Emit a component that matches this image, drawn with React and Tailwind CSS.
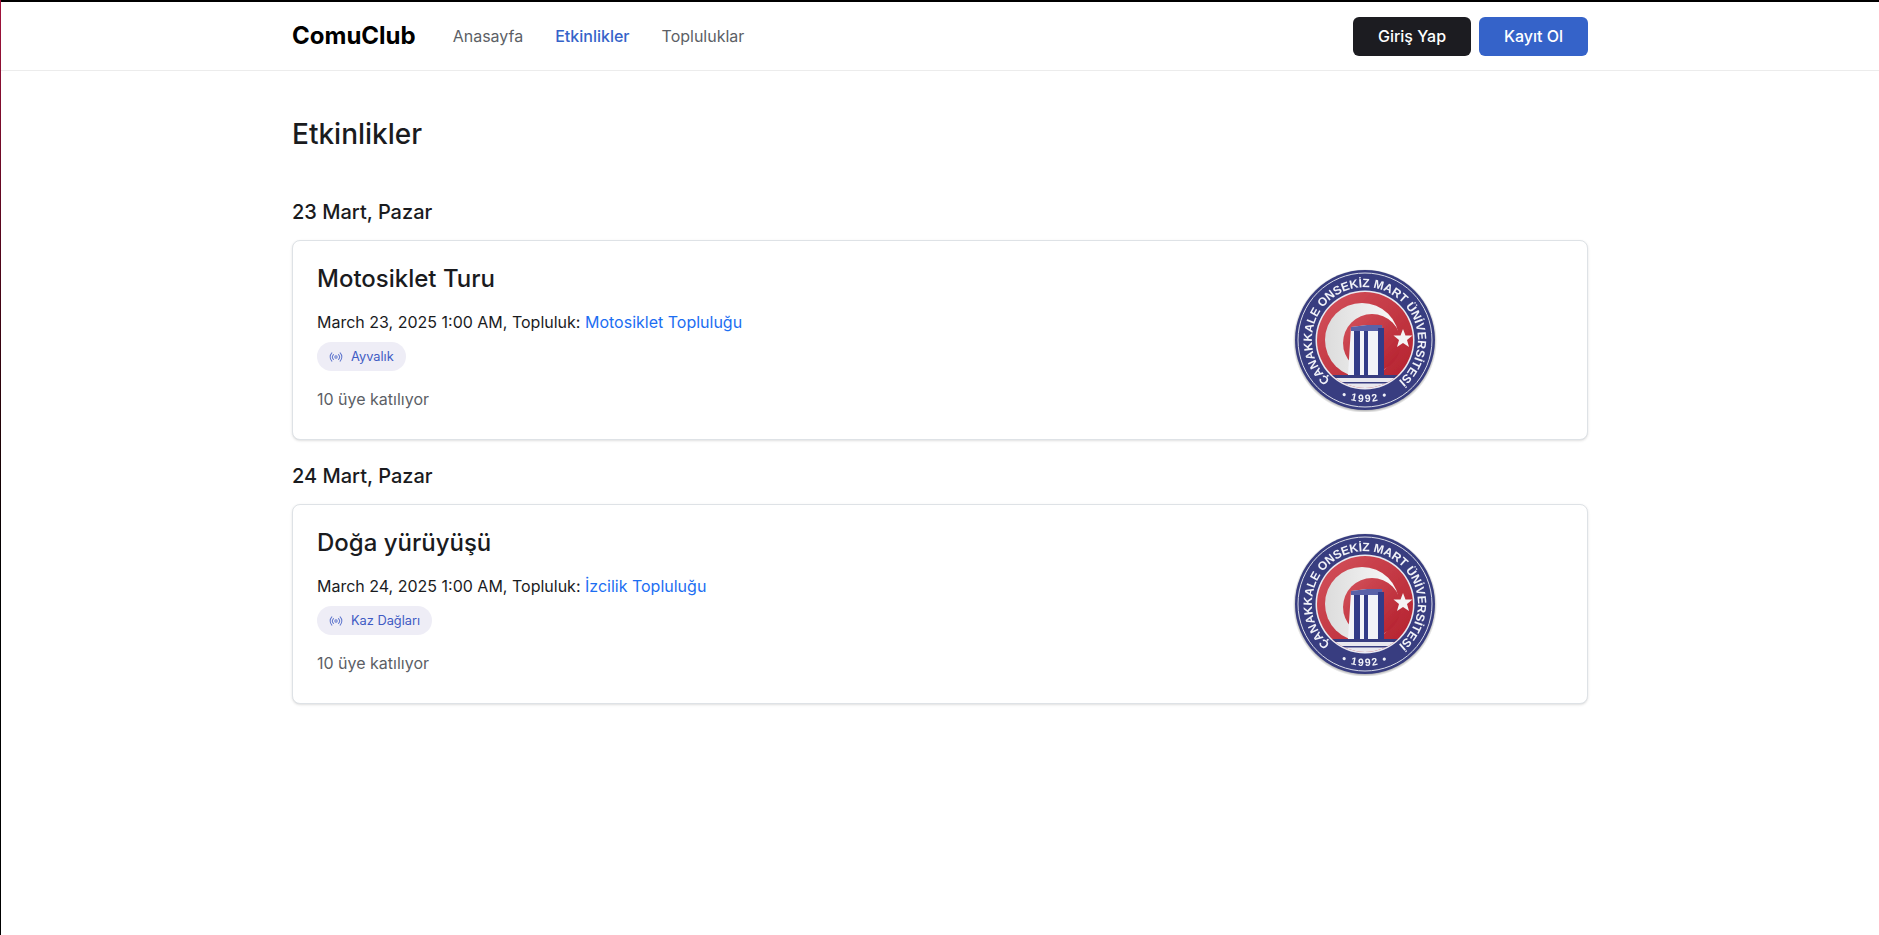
import { Radio } from "lucide-react";

const Seal = ({ id }) => (
    <svg width="144" height="144" viewBox="0 0 144 144" className="block">
        <defs>
            <radialGradient id={`${id}-glow`} cx="50%" cy="50%" r="50%">
                <stop offset="93%" stopColor="#000" stopOpacity="0.5" />
                <stop offset="100%" stopColor="#000" stopOpacity="0" />
            </radialGradient>
            <linearGradient id={`${id}-red`} x1="0" y1="0" x2="1" y2="1">
                <stop offset="0%" stopColor="#d4525c" />
                <stop offset="100%" stopColor="#b31f2c" />
            </linearGradient>
            <linearGradient id={`${id}-white`} x1="0" y1="0" x2="1" y2="0">
                <stop offset="0%" stopColor="#dcdcdc" />
                <stop offset="100%" stopColor="#fafafa" />
            </linearGradient>
            <clipPath id={`${id}-disk`}>
                <circle cx="72" cy="72" r="48" />
            </clipPath>
            <filter id={`${id}-soft`}>
                <feGaussianBlur stdDeviation="0.35" />
            </filter>
            <path id={`${id}-top`} d="M 37 112 A 53 53 0 1 1 100 117" fill="none" />
            <path id={`${id}-bottom`} d="M 36.5 122.8 A 62 62 0 0 0 107.5 122.8" fill="none" />
        </defs>
        <circle cx="72" cy="73" r="72" fill={`url(#${id}-glow)`} />
        <g filter={`url(#${id}-soft)`}>
            <circle cx="72" cy="72" r="70" fill="#383d80" />
            <circle cx="72" cy="72" r="67" fill="none" stroke="#d9dbe8" strokeWidth="1" />
            <circle cx="72" cy="72" r="49.5" fill="#e9eaf2" />
            <circle cx="72" cy="72" r="48" fill={`url(#${id}-red)`} />
            <g clipPath={`url(#${id}-disk)`}>
                <circle cx="69" cy="72" r="37" fill={`url(#${id}-white)`} />
                <circle cx="79" cy="75" r="29" fill={`url(#${id}-red)`} />
                <rect x="20" y="107" width="104" height="3" fill="#383d80" />
                <rect x="20" y="110" width="104" height="10" fill="#e8e8ee" />
                <rect x="20" y="114" width="104" height="1.5" fill="#383d80" />
            </g>
            <polygon points="110,61 112.5,67.5 119.5,67.5 114,72 116,79 110,75 104,79 106,72 100.5,67.5 107.5,67.5" fill="#f4f4f4" />
            <path d="M55 107 L58 59 L74 57 H89 L91 107 Z" fill="#f2f3f8" />
            <path d="M58 59 L74 57 H89 L89.5 63 H58 Z" fill="#5a62a8" />
            <rect x="61" y="63" width="6" height="44" fill="#323a88" />
            <rect x="71" y="63" width="4" height="44" fill="#323a88" />
            <rect x="85" y="60" width="6" height="47" fill="#323a88" />
            <text fill="#f1f2f8" fontFamily="'Liberation Sans', sans-serif" fontSize="12" fontWeight="700">
                <textPath href={`#${id}-top`} textLength="258" lengthAdjust="spacing">ÇANAKKALE ONSEKİZ MART ÜNİVERSİTESİ</textPath>
            </text>
            <text fill="#f1f2f8" fontFamily="'Liberation Sans', sans-serif" fontSize="10.5" fontWeight="700" letterSpacing="1.5" textAnchor="middle">
                <textPath href={`#${id}-bottom`} startOffset="50%">• 1992 •</textPath>
            </text>
        </g>
    </svg>
);

const events = [
    {
        day: "23 Mart, Pazar",
        title: "Motosiklet Turu",
        date: "March 23, 2025 1:00 AM",
        club: "Motosiklet Topluluğu",
        place: "Ayvalık",
    },
    {
        day: "24 Mart, Pazar",
        title: "Doğa yürüyüşü",
        date: "March 24, 2025 1:00 AM",
        club: "İzcilik Topluluğu",
        place: "Kaz Dağları",
    },
];

const App = () => {
    return (
        <div className="relative min-h-[935px] bg-white border-t-2 border-black text-[#1a1b1e]" style={{ fontFamily: "Inter, sans-serif" }}>
            {/* window edge */}
            <div className="absolute left-0 -top-[2px] bottom-0 w-px bg-gradient-to-b from-[#a3133c] to-black to-[70%]"></div>

            {/* Header */}
            <header className="h-[69px] border-b border-[#ececec]">
                <div className="w-[1296px] h-full ml-[292px] flex items-center justify-between">
                    <div className="flex items-center">
                        <span className="text-2xl font-bold text-black mr-[37px]">ComuClub</span>
                        <nav className="flex items-center gap-8 text-base font-normal text-[#5c5f66]">
                            <a>Anasayfa</a>
                            <a className="text-[#3563c9] font-medium">Etkinlikler</a>
                            <a>Topluluklar</a>
                        </nav>
                    </div>
                    <div className="flex items-center gap-2">
                        <button className="w-[118px] h-[39px] rounded-md bg-[#1c1c21] text-white text-base font-medium">Giriş Yap</button>
                        <button className="w-[109px] h-[39px] rounded-md bg-[#3563c9] text-white text-base font-medium">Kayıt Ol</button>
                    </div>
                </div>
            </header>

            {/* Events */}
            <main className="w-[1296px] ml-[292px]">
                <h1 className="text-[28px] leading-[34px] font-medium mt-[46px] mb-[49px]">Etkinlikler</h1>

                {events.map((event) => (
                    <section key={event.title} className="mb-[24px]">
                        <h2 className="text-xl leading-[24px] font-medium mb-[16px]">{event.day}</h2>
                        <div className="h-[200px] rounded-lg border border-[#dee2e6] bg-white shadow-sm pl-[24px] pr-[150px] flex items-center justify-between">
                            <div className="self-start pt-[23px] flex flex-col items-start">
                                <h3 className="text-2xl leading-[30px] font-medium mb-[16px]">{event.title}</h3>
                                <p className="text-base leading-[24px]">
                                    {event.date}, Topluluk: <a className="text-[#1c6ef2]">{event.club}</a>
                                </p>
                                <span className="inline-flex items-center gap-[8px] h-[29px] mt-[8px] px-[12px] rounded-full bg-[#eeedf6] text-[#3f5bc4] text-[12.8px]">
                                    <Radio className="size-[14px] opacity-80" strokeWidth={1.75} />
                                    {event.place}
                                </span>
                                <p className="text-base leading-[24px] mt-[16px] text-[#5c5f66]">10 üye katılıyor</p>
                            </div>
                            <Seal id={event.title.slice(0, 3)} />
                        </div>
                    </section>
                ))}
            </main>
        </div>
    );
};

export default App;
